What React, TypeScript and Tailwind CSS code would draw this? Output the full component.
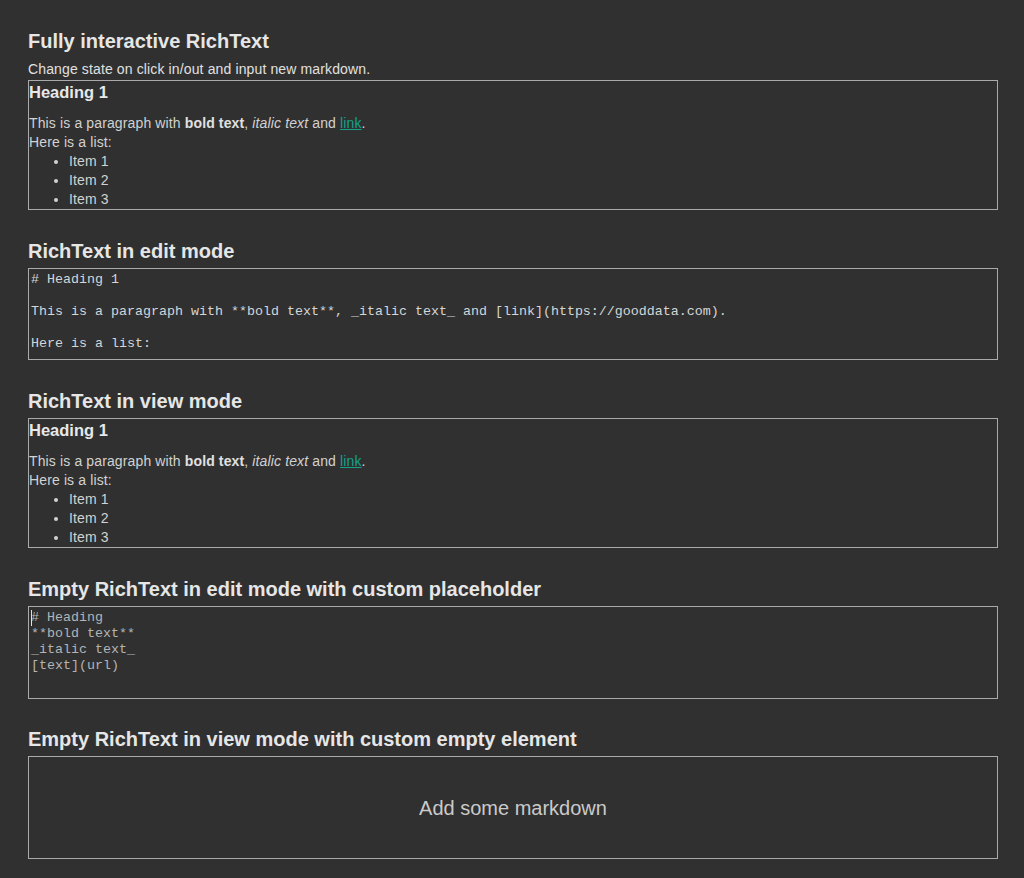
const FONT = "font-['Liberation_Sans',Arial,sans-serif]";

function Title({ children, className = "" }: { children: React.ReactNode; className?: string }) {
  return <h2 className={`text-[20px] leading-[23px] font-bold text-[#e6e6e6] ${className}`}>{children}</h2>;
}

function RichView() {
  return (
    <div className="border border-[#aaaaaa] text-[14px] leading-[19px] tracking-[0.13px] text-[#d2d2d2]">
      <h1 className="pt-px text-[16.5px] leading-[21px] tracking-normal font-bold text-[#e8e8e8] mb-[11px]">Heading 1</h1>
      <p>
        This is a paragraph with <strong className="font-bold text-[#e0e0e0]">bold text</strong>,{" "}
        <em className="italic">italic text</em> and{" "}
        <a href="#" className="text-[#14a08a] underline">
          link
        </a>
        .
      </p>
      <p>Here is a list:</p>
      <ul className="list-disc pl-10">
        <li>Item 1</li>
        <li>Item 2</li>
        <li>Item 3</li>
      </ul>
    </div>
  );
}

function Editor({ lines, placeholder = false, caret = false, height }: { lines: string[]; placeholder?: boolean; caret?: boolean; height: string }) {
  return (
    <div
      className={`relative border border-[#aaaaaa] px-[2px] pt-[3px] overflow-hidden font-['Liberation_Mono',monospace] text-[13.33px] leading-[16px] whitespace-pre ${height} ${
        placeholder ? "text-[#b4b4b4]" : "text-[#d6d6d6]"
      }`}
    >
      {caret && <span className="absolute left-[2px] top-[3px] h-[16px] w-px bg-[#e0e0e0]" />}
      {lines.map((l, i) => (
        <div key={i} className="h-[16px]">
          {l}
        </div>
      ))}
    </div>
  );
}

export default function App() {
  return (
    <div className={`min-h-screen bg-[#303030] pl-7 pr-[26px] pt-[30px] pb-5 ${FONT}`}>
      <section>
        <Title>Fully interactive RichText</Title>
        <p className="mt-[7px] text-[14px] leading-[19px] tracking-[0.13px] text-[#e0e0e0]">
          Change state on click in/out and input new markdown.
        </p>
        <div className="mt-px">
          <RichView />
        </div>
      </section>

      <section className="mt-[30px]">
        <Title>RichText in edit mode</Title>
        <div className="mt-[5px]">
          <Editor
            height="h-[92px]"
            lines={[
              "# Heading 1",
              "",
              "This is a paragraph with **bold text**, _italic text_ and [link](https://gooddata.com).",
              "",
              "Here is a list:",
              "",
            ]}
          />
        </div>
      </section>

      <section className="mt-[30px]">
        <Title>RichText in view mode</Title>
        <div className="mt-[5px]">
          <RichView />
        </div>
      </section>

      <section className="mt-[30px]">
        <Title>Empty RichText in edit mode with custom placeholder</Title>
        <div className="mt-[5px]">
          <Editor height="h-[93px]" placeholder caret lines={["# Heading", "**bold text**", "_italic text_", "[text](url)"]} />
        </div>
      </section>

      <section className="mt-[29px]">
        <Title>Empty RichText in view mode with custom empty element</Title>
        <div className="mt-[5px] h-[103px] border border-[#aaaaaa] flex items-center justify-center text-[20px] text-[#cacaca]">
          Add some markdown
        </div>
      </section>
    </div>
  );
}
